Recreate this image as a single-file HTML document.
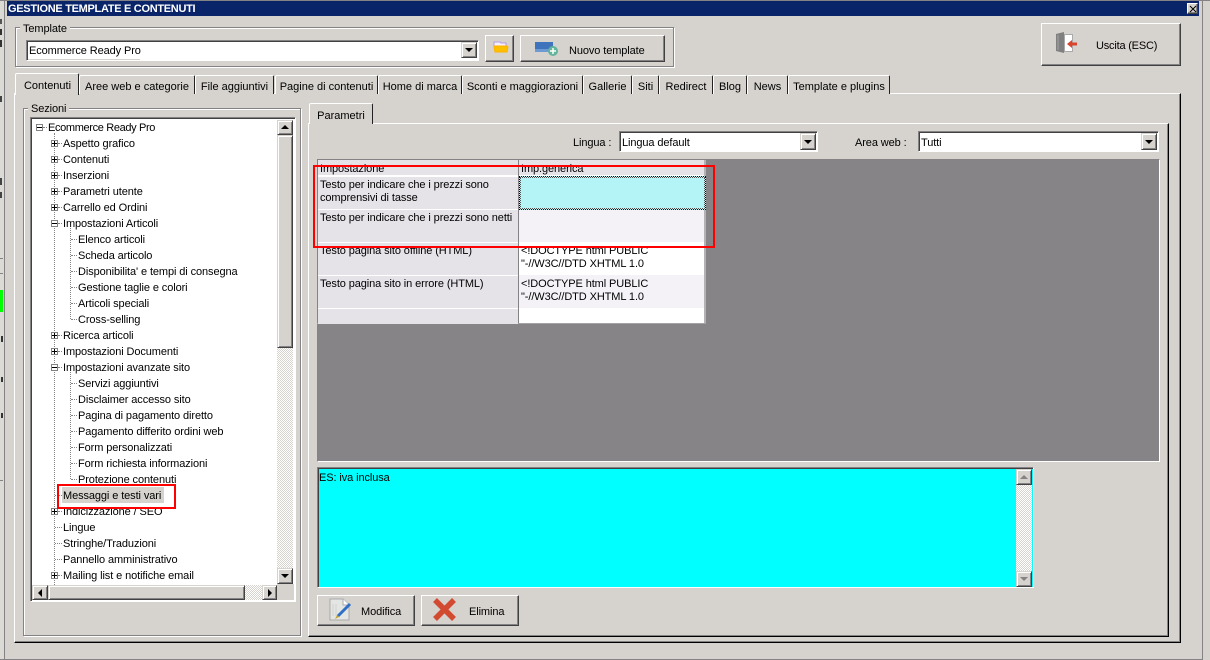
<!DOCTYPE html>
<html><head><meta charset="utf-8"><style>
html,body{margin:0;padding:0}
body{width:1210px;height:660px;overflow:hidden;background:#d6d3ce;position:relative;font:11px/13px "Liberation Sans",sans-serif;color:#000}
.a,.t,.b,.g,.c,.tab,.sb,.tx{position:absolute;box-sizing:border-box}
.t{white-space:nowrap;letter-spacing:-.1px;transform:translateY(1px)}
.g{border:1px solid #848284;box-shadow:1px 1px 0 #fff,inset 1px 1px 0 #fff}
.b{background:#d6d3ce;border-top:1px solid #fff;border-left:1px solid #fff;border-right:1px solid #424142;border-bottom:1px solid #424142;box-shadow:inset -1px -1px 0 #848284}
.c{background:#fff;border-top:1px solid #848284;border-left:1px solid #848284;box-shadow:inset 1px 1px 0 #424142,1px 1px 0 #fff}
.tab{background:#d6d3ce;border-top:1px solid #fff;border-left:1px solid #fff;border-right:1px solid #222;border-radius:2px 2px 0 0;text-align:center;line-height:22px;height:19px;top:75px;white-space:nowrap}
.sb{background:#d6d3ce;border-top:1px solid #d6d3ce;border-left:1px solid #d6d3ce;border-right:1px solid #424142;border-bottom:1px solid #424142;box-shadow:inset 1px 1px 0 #fff,inset -1px -1px 0 #848284}
.d{position:absolute;background:repeating-conic-gradient(#fff 0 25%,#d6d3ce 0 50%) 0 0/2px 2px}
.ar{position:absolute;width:0;height:0;border-style:solid;border-color:transparent}
.dn{border-width:4px 4px 0;border-top-color:#000}
.up{border-width:0 4px 4px;border-bottom-color:#000}
.lf{border-width:4px 4px 4px 0;border-right-color:#000}
.rt{border-width:4px 0 4px 4px;border-left-color:#000}
.pl,.mn{position:absolute;width:7px;height:7px;border:1px solid #848284;box-sizing:border-box;background:#fff}
.pl:before,.mn:before{content:"";position:absolute;left:0;top:2px;width:5px;height:1px;background:#000}
.pl:after{content:"";position:absolute;left:2px;top:0;width:1px;height:5px;background:#000}
.v{position:absolute;border-left:1px dotted #848284;width:0}
.h{position:absolute;border-top:1px dotted #848284;height:0}
.tx{height:14px;white-space:nowrap;letter-spacing:-.1px;transform:translateY(1px)}
.lc{position:absolute;left:318px;width:200px;background:#e6e3e8;border-bottom:1px solid #848284;border-top:1px solid #fff}
.rc{position:absolute;left:519px;width:185px}
.r{position:absolute;border:2px solid #f00;box-sizing:border-box}
</style></head><body>

<!-- outside left -->
<div class="a" style="left:0;top:0;width:4px;height:660px;background:#dcdad5"></div>
<div class="a" style="left:4px;top:0;width:1px;height:660px;background:#848284"></div>
<div class="a" style="left:0;top:290px;width:3px;height:22px;background:#00ff00"></div>
<div class="a" style="left:0;top:258px;width:3px;height:1px;background:#848284"></div>
<div class="a" style="left:0;top:273px;width:3px;height:1px;background:#848284"></div>
<div class="a" style="left:0;top:480px;width:3px;height:1px;background:#848284"></div>
<div class="a" style="left:0;top:19px;width:2px;height:5px;background:#555"></div>
<div class="a" style="left:0;top:29px;width:2px;height:6px;background:#333"></div>
<div class="a" style="left:0;top:40px;width:2px;height:7px;background:#333"></div>
<div class="a" style="left:0;top:96px;width:2px;height:6px;background:#444"></div>
<div class="a" style="left:0;top:178px;width:2px;height:7px;background:#444"></div>
<div class="a" style="left:0;top:192px;width:2px;height:6px;background:#444"></div>
<div class="a" style="left:1px;top:336px;width:2px;height:6px;background:#333"></div>
<div class="a" style="left:1px;top:377px;width:2px;height:5px;background:#333"></div>
<div class="a" style="left:1px;top:413px;width:2px;height:5px;background:#333"></div>
<div class="a" style="left:0;top:0;width:1210px;height:1px;background:#848284"></div>
<div class="a" style="left:0;top:659px;width:1203px;height:1px;background:#848284"></div>
<div class="a" style="left:1202px;top:0;width:1px;height:660px;background:#848284"></div>

<!-- title -->
<div class="a" style="left:7px;top:1px;width:1192px;height:15px;background:#0a246a"></div>
<div class="t" style="left:8px;top:2px;color:#fff;font-weight:bold;font-size:11px;letter-spacing:-.3px">GESTIONE TEMPLATE E CONTENUTI</div>
<div class="b" style="left:1187px;top:3px;width:11px;height:11px;border-color:#fff #424142 #424142 #fff"><svg class="a" style="left:1px;top:1px" width="8" height="8"><path d="M1 1L7 7M7 1L1 7" stroke="#000" fill="none"/></svg></div>

<!-- template group -->
<div class="g" style="left:15px;top:27px;width:659px;height:40px"></div>
<div class="t" style="left:20px;top:22px;background:#d6d3ce;padding:0 3px">Template</div>
<div class="c" style="left:26px;top:40px;width:452px;height:20px"></div>
<div class="a" style="left:28px;top:59px;width:112px;height:1px;background:#d6d3ce"></div>
<div class="t" style="left:29px;top:44px">Ecommerce Ready Pro</div>
<div class="sb" style="left:461px;top:42px;width:16px;height:16px"><i class="ar dn" style="left:3px;top:5px"></i></div>
<div class="b" style="left:485px;top:35px;width:29px;height:27px"><svg class="a" style="left:7px;top:5px" width="16" height="13"><path d="M1 1H7L8 2H13V5H1Z" fill="#f5f0ff" stroke="#b49be0"/><path d="M1 5H14L15 6 14 11H2L1 6Z" fill="#ffc000" stroke="#ffb000"/></svg></div>
<div class="b" style="left:520px;top:35px;width:145px;height:27px">
<svg class="a" style="left:14px;top:6px" width="24" height="16"><rect x="0" y="0" width="18" height="10" fill="#3f74bd"/><rect x="0" y="7" width="18" height="3" fill="#6d9ad2"/><circle cx="18" cy="9" r="5" fill="#63b39d"/><path d="M18 6V12M15 9H21" stroke="#fff" stroke-width="1.5"/></svg>
<span class="t" style="left:48px;top:8px">Nuovo template</span></div>

<!-- exit -->
<div class="b" style="left:1041px;top:23px;width:140px;height:43px">
<svg class="a" style="left:14px;top:8px" width="24" height="24"><path d="M0 2L8 0V21L0 19Z" fill="#808080"/><path d="M2 3V18" stroke="#a5a5a5"/><rect x="8.5" y="2.5" width="8" height="17" fill="#fff" stroke="#aaa"/><path d="M11 12L16 8V10.5H21V13.5H16V16Z" fill="#d9442c"/></svg>
<span class="t" style="left:54px;top:15px;letter-spacing:-.2px">Uscita (ESC)</span></div>

<!-- main tabs pane -->
<div class="a" style="left:14px;top:93px;width:1167px;height:550px;border-top:1px solid #fff;border-left:1px solid #fff;border-right:1px solid #000;border-bottom:1px solid #000;box-shadow:inset -1px -1px 0 #848284"></div>
<div class="tab" style="left:79px;width:116px">Aree web e categorie</div>
<div class="tab" style="left:195px;width:79px">File aggiuntivi</div>
<div class="tab" style="left:275px;width:103px">Pagine di contenuti</div>
<div class="tab" style="left:378px;width:84px">Home di marca</div>
<div class="tab" style="left:462px;width:121px">Sconti e maggiorazioni</div>
<div class="tab" style="left:583px;width:49px">Gallerie</div>
<div class="tab" style="left:632px;width:27px">Siti</div>
<div class="tab" style="left:659px;width:54px">Redirect</div>
<div class="tab" style="left:713px;width:34px">Blog</div>
<div class="tab" style="left:747px;width:41px">News</div>
<div class="tab" style="left:788px;width:102px">Template e plugins</div>
<div class="tab" style="left:15px;top:73px;width:64px;height:22px;line-height:24px;padding-left:1px">Contenuti</div>

<!-- Sezioni group -->
<div class="g" style="left:23px;top:108px;width:278px;height:528px"></div>
<div class="t" style="left:28px;top:102px;background:#d6d3ce;padding:0 3px">Sezioni</div>
<div class="c" style="left:30px;top:117px;width:265px;height:484px"></div>
<div class="a" style="left:277px;top:584px;width:17px;height:16px;background:#d6d3ce"></div>
<div class="d" style="left:277px;top:135px;width:16px;height:433px"></div>
<div class="sb" style="left:277px;top:120px;width:16px;height:15px"><i class="ar up" style="left:3px;top:4px"></i></div>
<div class="sb" style="left:277px;top:135px;width:16px;height:213px"></div>
<div class="sb" style="left:277px;top:568px;width:16px;height:16px"><i class="ar dn" style="left:3px;top:5px"></i></div>
<div class="d" style="left:48px;top:585px;width:214px;height:15px"></div>
<div class="sb" style="left:32px;top:585px;width:16px;height:15px"><i class="ar lf" style="left:5px;top:3px"></i></div>
<div class="sb" style="left:48px;top:585px;width:197px;height:15px"></div>
<div class="sb" style="left:262px;top:585px;width:15px;height:15px"><i class="ar rt" style="left:5px;top:3px"></i></div>

<!-- tree lines -->
<div class="v" style="left:54px;top:133px;height:452px"></div>
<div class="v" style="left:70px;top:228px;height:91px"></div>
<div class="v" style="left:70px;top:372px;height:107px"></div>
<div class="h" style="left:43px;top:127px;width:4px"></div>
<div class="h" style="left:58px;top:143px;width:4px"></div><div class="h" style="left:58px;top:159px;width:4px"></div><div class="h" style="left:58px;top:175px;width:4px"></div><div class="h" style="left:58px;top:191px;width:4px"></div><div class="h" style="left:58px;top:207px;width:4px"></div><div class="h" style="left:58px;top:223px;width:4px"></div>
<div class="h" style="left:71px;top:239px;width:6px"></div><div class="h" style="left:71px;top:255px;width:6px"></div><div class="h" style="left:71px;top:271px;width:6px"></div><div class="h" style="left:71px;top:287px;width:6px"></div><div class="h" style="left:71px;top:303px;width:6px"></div><div class="h" style="left:71px;top:319px;width:6px"></div>
<div class="h" style="left:58px;top:335px;width:4px"></div><div class="h" style="left:58px;top:351px;width:4px"></div><div class="h" style="left:58px;top:367px;width:4px"></div>
<div class="h" style="left:71px;top:383px;width:6px"></div><div class="h" style="left:71px;top:399px;width:6px"></div><div class="h" style="left:71px;top:415px;width:6px"></div><div class="h" style="left:71px;top:431px;width:6px"></div><div class="h" style="left:71px;top:447px;width:6px"></div><div class="h" style="left:71px;top:463px;width:6px"></div><div class="h" style="left:71px;top:479px;width:6px"></div>
<div class="h" style="left:55px;top:495px;width:7px"></div><div class="h" style="left:58px;top:511px;width:4px"></div><div class="h" style="left:55px;top:527px;width:7px"></div><div class="h" style="left:55px;top:543px;width:7px"></div><div class="h" style="left:55px;top:559px;width:7px"></div><div class="h" style="left:58px;top:575px;width:4px"></div>

<i class="mn" style="left:36px;top:124px"></i>
<i class="pl" style="left:51px;top:140px"></i><i class="pl" style="left:51px;top:156px"></i><i class="pl" style="left:51px;top:172px"></i><i class="pl" style="left:51px;top:188px"></i><i class="pl" style="left:51px;top:204px"></i>
<i class="mn" style="left:51px;top:220px"></i>
<i class="pl" style="left:51px;top:332px"></i><i class="pl" style="left:51px;top:348px"></i>
<i class="mn" style="left:51px;top:364px"></i>
<i class="pl" style="left:51px;top:508px"></i><i class="pl" style="left:51px;top:572px"></i>

<div class="tx" style="left:48px;top:121px;letter-spacing:-.35px">Ecommerce Ready Pro</div>
<div class="tx" style="left:63px;top:137px">Aspetto grafico</div>
<div class="tx" style="left:63px;top:153px">Contenuti</div>
<div class="tx" style="left:63px;top:169px">Inserzioni</div>
<div class="tx" style="left:63px;top:185px">Parametri utente</div>
<div class="tx" style="left:63px;top:201px">Carrello ed Ordini</div>
<div class="tx" style="left:63px;top:217px">Impostazioni Articoli</div>
<div class="tx" style="left:78px;top:233px">Elenco articoli</div>
<div class="tx" style="left:78px;top:249px">Scheda articolo</div>
<div class="tx" style="left:78px;top:265px">Disponibilita' e tempi di consegna</div>
<div class="tx" style="left:78px;top:281px">Gestione taglie e colori</div>
<div class="tx" style="left:78px;top:297px">Articoli speciali</div>
<div class="tx" style="left:78px;top:313px">Cross-selling</div>
<div class="tx" style="left:63px;top:329px">Ricerca articoli</div>
<div class="tx" style="left:63px;top:345px">Impostazioni Documenti</div>
<div class="tx" style="left:63px;top:361px">Impostazioni avanzate sito</div>
<div class="tx" style="left:78px;top:377px">Servizi aggiuntivi</div>
<div class="tx" style="left:78px;top:393px">Disclaimer accesso sito</div>
<div class="tx" style="left:78px;top:409px">Pagina di pagamento diretto</div>
<div class="tx" style="left:78px;top:425px">Pagamento differito ordini web</div>
<div class="tx" style="left:78px;top:441px">Form personalizzati</div>
<div class="tx" style="left:78px;top:457px">Form richiesta informazioni</div>
<div class="tx" style="left:78px;top:473px">Protezione contenuti</div>
<div class="a" style="left:62px;top:487px;width:102px;height:16px;background:#d6d3ce"></div>
<div class="tx" style="left:63px;top:489px">Messaggi e testi vari</div>
<div class="tx" style="left:63px;top:505px">Indicizzazione / SEO</div>
<div class="tx" style="left:63px;top:521px">Lingue</div>
<div class="tx" style="left:63px;top:537px">Stringhe/Traduzioni</div>
<div class="tx" style="left:63px;top:553px">Pannello amministrativo</div>
<div class="tx" style="left:63px;top:569px">Mailing list e notifiche email</div>
<div class="r" style="left:57px;top:484px;width:119px;height:25px"></div>

<!-- right inner tab -->
<div class="a" style="left:308px;top:123px;width:861px;height:514px;border-top:1px solid #fff;border-left:1px solid #fff;border-right:1px solid #000;border-bottom:1px solid #000;box-shadow:inset -1px -1px 0 #848284"></div>
<div class="tab" style="left:309px;top:103px;width:64px;height:21px;line-height:24px">Parametri</div>

<div class="t" style="left:573px;top:136px">Lingua :</div>
<div class="c" style="left:619px;top:131px;width:198px;height:20px"></div>
<div class="t" style="left:622px;top:136px">Lingua default</div>
<div class="sb" style="left:800px;top:133px;width:16px;height:17px"><i class="ar dn" style="left:3px;top:6px"></i></div>
<div class="t" style="left:855px;top:136px">Area web :</div>
<div class="c" style="left:918px;top:131px;width:240px;height:20px"></div>
<div class="t" style="left:921px;top:136px">Tutti</div>
<div class="sb" style="left:1141px;top:133px;width:16px;height:17px"><i class="ar dn" style="left:3px;top:6px"></i></div>

<!-- grid -->
<div class="a" style="left:317px;top:159px;width:843px;height:303px;background:#868487;border-top:1px solid #848284;border-left:1px solid #848284;border-right:1px solid #fff;border-bottom:1px solid #fff"></div>
<div class="a" style="left:318px;top:160px;width:388px;height:164px;background:#fff"></div>
<div class="a" style="left:704px;top:160px;width:2px;height:164px;background:#b5b2b5"></div>
<div class="a" style="left:318px;top:159px;width:388px;height:1px;background:#848284"></div>
<div class="a" style="left:317px;top:323px;width:389px;height:1px;background:#a5a2a5"></div>
<div class="a" style="left:318px;top:160px;width:200px;height:16px;background:#e6e3e8;border-bottom:1px solid #fff"></div>
<div class="a" style="left:519px;top:160px;width:185px;height:16px;background:#e6e3e8;border-bottom:1px solid #fff"></div>
<div class="lc" style="top:176px;height:33px"></div>
<div class="lc" style="top:209px;height:33px"></div>
<div class="lc" style="top:242px;height:33px"></div>
<div class="lc" style="top:275px;height:33px"></div>
<div class="lc" style="top:308px;height:15px;border-bottom:0"></div>
<div class="a" style="left:518px;top:160px;width:1px;height:163px;background:#848284"></div>
<div class="rc" style="top:208px;height:34px;background:#f5f2f7"></div>
<div class="rc" style="top:275px;height:33px;background:#f5f2f7"></div>
<div class="rc" style="top:176px;height:32px;background:#b4f3f6;border:1px dotted #000;outline:1px dotted #555;outline-offset:-2px"></div>
<div class="t" style="left:320px;top:162px">Impostazione</div>
<div class="t" style="left:521px;top:162px">Imp.generica</div>
<div class="t" style="left:320px;top:178px">Testo per indicare che i prezzi sono</div>
<div class="t" style="left:320px;top:191px">comprensivi di tasse</div>
<div class="t" style="left:320px;top:211px">Testo per indicare che i prezzi sono netti</div>
<div class="t" style="left:320px;top:244px">Testo pagina sito offline (HTML)</div>
<div class="t" style="left:521px;top:244px">&lt;!DOCTYPE html PUBLIC</div>
<div class="t" style="left:521px;top:257px">"-//W3C//DTD XHTML 1.0</div>
<div class="t" style="left:320px;top:277px">Testo pagina sito in errore (HTML)</div>
<div class="t" style="left:521px;top:277px">&lt;!DOCTYPE html PUBLIC</div>
<div class="t" style="left:521px;top:290px">"-//W3C//DTD XHTML 1.0</div>
<div class="r" style="left:313px;top:165px;width:402px;height:83px"></div>

<!-- memo -->
<div class="c" style="left:317px;top:467px;width:716px;height:120px;background:#00ffff"></div>
<div class="d" style="left:1016px;top:469px;width:16px;height:118px"></div>
<div class="sb" style="left:1016px;top:469px;width:16px;height:16px"><i class="ar up" style="left:3px;top:5px;border-bottom-color:#848284"></i></div>
<div class="sb" style="left:1016px;top:571px;width:16px;height:16px"><i class="ar dn" style="left:3px;top:5px;border-top-color:#848284"></i></div>
<div class="t" style="left:319px;top:471px">ES: iva inclusa</div>

<!-- buttons -->
<div class="b" style="left:317px;top:595px;width:98px;height:31px">
<svg class="a" style="left:11px;top:2px" width="24" height="24"><path d="M1 1H14L20 7V22H1Z" fill="#e4e6e4" stroke="#aaa"/><path d="M14 1V7H20" fill="#fff" stroke="#aaa"/><path d="M4 6V18M7 6V18" stroke="#cfd2cf"/><path d="M9 18L21 6" stroke="#2f6fc4" stroke-width="3"/><path d="M6 21L8 17 10 19Z" fill="#c9a227"/></svg>
<span class="t" style="left:43px;top:9px">Modifica</span></div>
<div class="b" style="left:421px;top:595px;width:98px;height:31px">
<svg class="a" style="left:11px;top:2px" width="24" height="24"><path d="M2 2L21 21M21 2L2 21" stroke="#d24a30" stroke-width="5.5"/></svg>
<span class="t" style="left:47px;top:9px">Elimina</span></div>

</body></html>
